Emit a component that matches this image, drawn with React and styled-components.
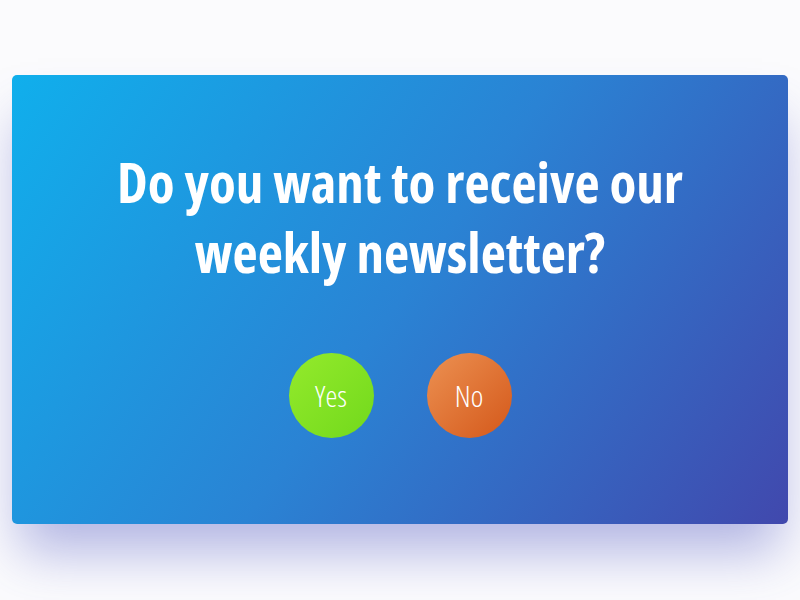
import React from 'react';
import styled, { createGlobalStyle } from 'styled-components';

const GlobalStyle = createGlobalStyle`
  html, body {
    margin: 0;
    padding: 0;
    background: #fbfbfd;
  }
  body {
    font-family: "Open Sans", "Noto Sans", sans-serif;
  }
`;

const Page = styled.div`
  width: 800px;
  height: 600px;
  box-sizing: border-box;
  padding: 75px 12px 0;
`;

const Card = styled.div`
  height: 449px;
  border-radius: 5px;
  background: linear-gradient(125deg, #10afec 0%, #2a83d4 50%, #4148ad 100%);
  box-shadow: 0 36px 50px -8px rgba(70, 78, 190, 0.4);
  display: flex;
  flex-direction: column;
  align-items: center;
  padding-top: 72px;
  box-sizing: border-box;
`;

const Title = styled.h1`
  margin: 0;
  color: #fff;
  font-family: "Open Sans", sans-serif;
  font-stretch: 75%;
  font-weight: 700;
  font-size: 55px;
  line-height: 70px;
  text-align: center;
  max-width: 620px;
`;

const Choices = styled.div`
  display: flex;
  gap: 53px;
  margin-top: 66px;
`;

const Choice = styled.button`
  width: 85px;
  height: 85px;
  border-radius: 50%;
  border: none;
  padding: 0;
  color: #fff;
  font-family: "Open Sans", sans-serif;
  font-stretch: 75%;
  font-weight: 300;
  font-size: 30px;
  cursor: pointer;
  background: ${p => p.$tone === 'yes'
    ? 'linear-gradient(135deg, #94ea2c 0%, #72d91c 100%)'
    : 'linear-gradient(135deg, #ec9152 0%, #d4581a 100%)'};
`;

const App = () => (
  <>
    <GlobalStyle />
    <Page>
      <Card>
        <Title>Do you want to receive our weekly newsletter?</Title>
        <Choices>
          <Choice $tone="yes">Yes</Choice>
          <Choice $tone="no">No</Choice>
        </Choices>
      </Card>
    </Page>
  </>
);

export default App;
